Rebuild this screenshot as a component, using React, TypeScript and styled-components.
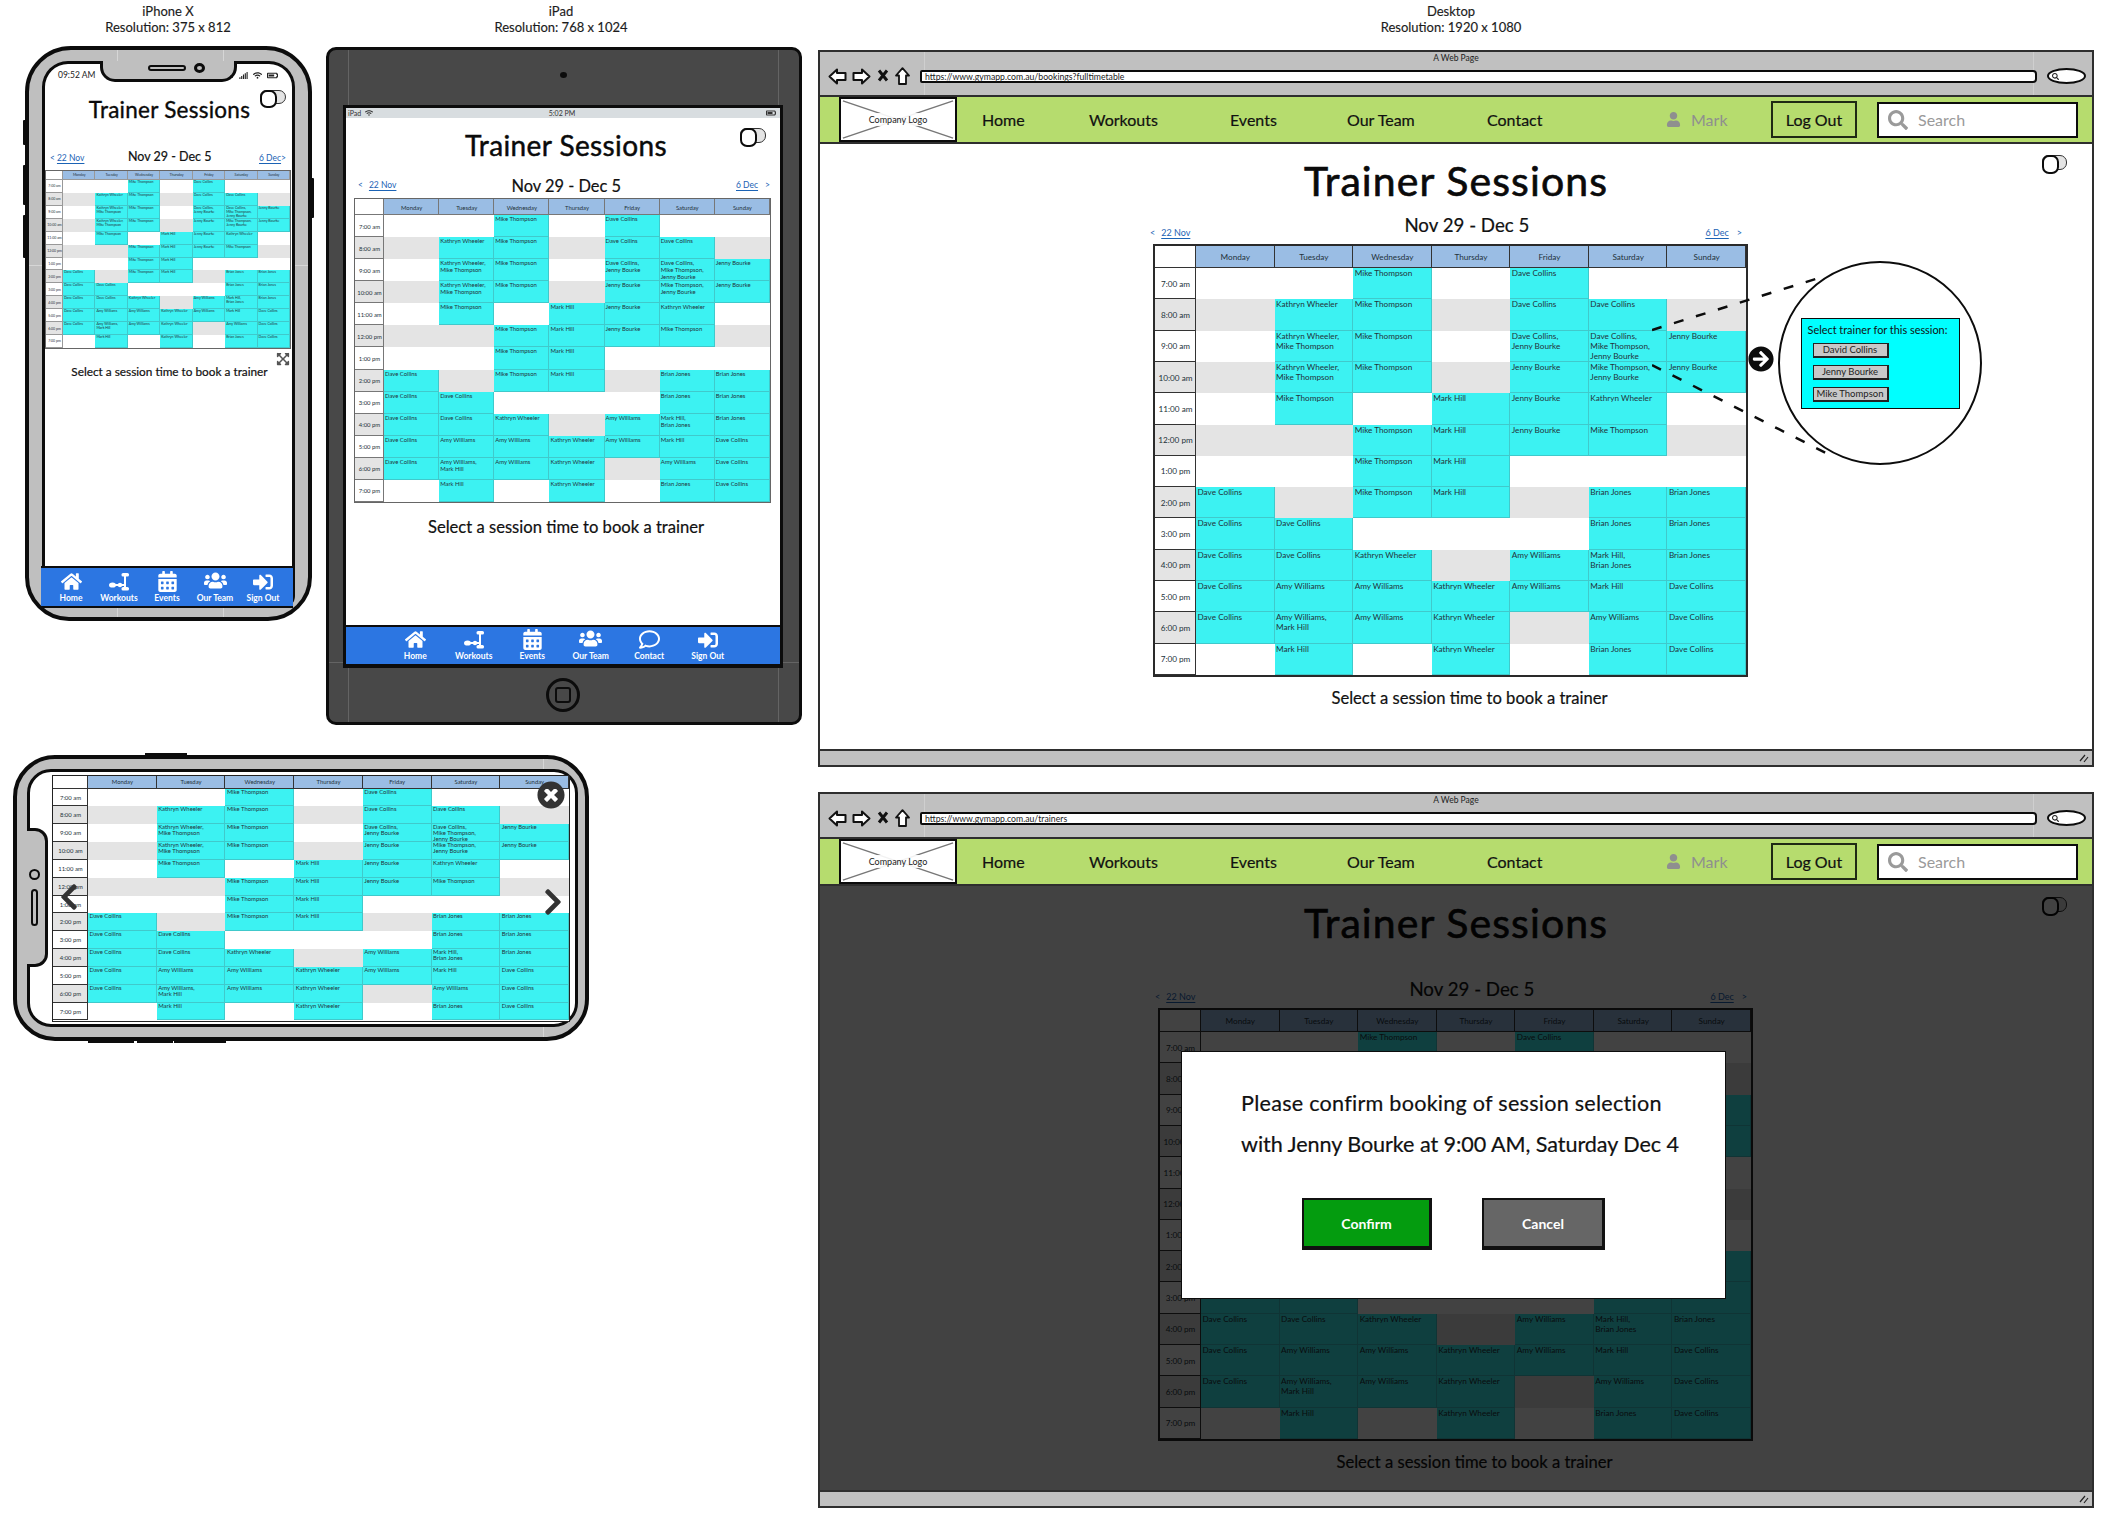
import React from 'react';
import styled, { createGlobalStyle } from 'styled-components';
import {
  FaArrowCircleRight,
  FaBatteryThreeQuarters,
  FaCalendarAlt,
  FaChevronLeft,
  FaChevronRight,
  FaExpandArrowsAlt,
  FaHome,
  FaRegComment,
  FaSearch,
  FaSignal,
  FaSignInAlt,
  FaTimesCircle,
  FaUser,
  FaUsers,
  FaWifi,
} from 'react-icons/fa';

const GlobalStyle = createGlobalStyle`
  html, body { margin: 0; padding: 0; background: #fff; }
  * { box-sizing: border-box; }
  body { font-family: Lato, "Open Sans", sans-serif; color: #111; }
`;

const INK = '#0c0c0c';
const CASE = '#bfbfbf';
const CYAN = '#3cf2f2';
const SHADE = '#e4e4e4';
const BLUE = '#2c76e2';
const GREEN = '#b6dc6e';
const NARROW = '"Liberation Sans Narrow", Lato, sans-serif';

const Canvas = styled.div`
  position: relative;
  width: 2112px;
  height: 1524px;
  overflow: hidden;
  background: #fff;
`;

/* each mockup sits at its own place on the wireframe board */
const Slot = styled.section<{ $x: number; $y: number; $w: number; $h: number }>`
  position: absolute;
  left: ${({ $x }) => $x}px;
  top: ${({ $y }) => $y}px;
  width: ${({ $w }) => $w}px;
  height: ${({ $h }) => $h}px;
`;

const Caption = styled.div`
  text-align: center;
  font-size: 13px;
  line-height: 16px;
  color: #1c1c1c;
  -webkit-text-stroke: 0.15px #1c1c1c;
`;

/* timetable */
interface TableMetrics {
  width: number;
  height: number;
  head: number;
  first: number;
  family: string;
  font: number;
  line: number;
  pad: number;
  frame: string;
  rule: string;
}

const desktopTable: TableMetrics = { width: 595, height: 433, head: 22, first: 41, family: NARROW, font: 8.2, line: 10, pad: 1.5, frame: '2px solid #2a2a2a', rule: '#333' };
const tabletTable: TableMetrics = { width: 417, height: 305, head: 16, first: 29, family: NARROW, font: 5.9, line: 7, pad: 1, frame: '1.5px solid #666', rule: '#777' };
const phoneTable: TableMetrics = { width: 246, height: 179, head: 9, first: 17, family: NARROW, font: 3.5, line: 4.1, pad: 1, frame: '1px solid #666', rule: '#999' };
const wideTable: TableMetrics = { width: 518, height: 247, head: 13, first: 35, family: 'Lato, sans-serif', font: 5.9, line: 5.8, pad: 1.5, frame: '1.5px solid #222', rule: '#333' };

const TableGrid = styled.div<{ $m: TableMetrics }>`
  display: grid;
  flex: none;
  width: ${({ $m }) => $m.width}px;
  height: ${({ $m }) => $m.height}px;
  grid-template-columns: ${({ $m }) => $m.first}px repeat(7, 1fr);
  grid-template-rows: ${({ $m }) => $m.head}px repeat(13, 1fr);
  border: ${({ $m }) => $m.frame};
  background: #fff;
  font-family: ${({ $m }) => $m.family};
  font-size: ${({ $m }) => $m.font}px;
  line-height: ${({ $m }) => $m.line}px;
  color: #23323a;
`;

const HeadCell = styled.div<{ $rule: string }>`
  display: flex;
  align-items: center;
  justify-content: center;
  background: #9abde4;
  box-shadow: inset -1px -1px 0 ${({ $rule }) => $rule};
`;

const CornerCell = styled.div<{ $rule: string }>`
  background: #fff;
  box-shadow: inset -1px -1px 0 ${({ $rule }) => $rule};
`;

const TimeCell = styled.div<{ $shade: boolean; $rule: string }>`
  display: flex;
  align-items: center;
  justify-content: center;
  white-space: nowrap;
  background: ${({ $shade }) => ($shade ? SHADE : '#fff')};
  box-shadow: inset -1px -1px 0 ${({ $rule }) => $rule};
`;

const SessionCell = styled.div<{ $shade: boolean; $booked: boolean; $pad: number }>`
  padding-left: ${({ $pad }) => $pad}px;
  white-space: pre-line;
  background: ${({ $booked, $shade }) => ($booked ? CYAN : $shade ? SHADE : '#fff')};
  box-shadow: ${({ $booked }) => ($booked ? 'inset -1px -1px 0 rgba(70, 140, 145, 0.4)' : 'none')};
`;

const DAYS = ['Monday', 'Tuesday', 'Wednesday', 'Thursday', 'Friday', 'Saturday', 'Sunday'];
const MT = 'Mike Thompson';
const KW = 'Kathryn Wheeler';
const DC = 'Dave Collins';
const JB = 'Jenny Bourke';
const MH = 'Mark Hill';
const BJ = 'Brian Jones';
const AW = 'Amy Williams';

const SCHEDULE: [string, string[]][] = [
  ['7:00 am', ['', '', MT, '', DC, '', '']],
  ['8:00 am', ['', KW, MT, '', DC, DC, '']],
  ['9:00 am', ['', `${KW},\n${MT}`, MT, '', `${DC},\n${JB}`, `${DC},\n${MT},\n${JB}`, JB]],
  ['10:00 am', ['', `${KW},\n${MT}`, MT, '', JB, `${MT},\n${JB}`, JB]],
  ['11:00 am', ['', MT, '', MH, JB, KW, '']],
  ['12:00 pm', ['', '', MT, MH, JB, MT, '']],
  ['1:00 pm', ['', '', MT, MH, '', '', '']],
  ['2:00 pm', [DC, '', MT, MH, '', BJ, BJ]],
  ['3:00 pm', [DC, DC, '', '', '', BJ, BJ]],
  ['4:00 pm', [DC, DC, KW, '', AW, `${MH},\n${BJ}`, BJ]],
  ['5:00 pm', [DC, AW, AW, KW, AW, MH, DC]],
  ['6:00 pm', [DC, `${AW},\n${MH}`, AW, KW, '', AW, DC]],
  ['7:00 pm', ['', MH, '', KW, '', BJ, DC]],
];

const Timetable = ({ metrics }: { metrics: TableMetrics }) => (
  <TableGrid $m={metrics}>
    <CornerCell $rule={metrics.rule} />
    {DAYS.map((day) => (
      <HeadCell key={day} $rule={metrics.rule}>{day}</HeadCell>
    ))}
    {SCHEDULE.map(([time, cells], row) => (
      <React.Fragment key={time}>
        <TimeCell $shade={row % 2 === 1} $rule={metrics.rule}>{time}</TimeCell>
        {cells.map((name, col) => (
          <SessionCell key={col} $shade={row % 2 === 1} $booked={name !== ''} $pad={metrics.pad}>
            {name}
          </SessionCell>
        ))}
      </React.Fragment>
    ))}
  </TableGrid>
);

/* bits shared by the mockups */
const Toggle = styled.div<{ $w: number; $h: number }>`
  position: relative;
  flex: none;
  width: ${({ $w }) => $w}px;
  height: ${({ $h }) => $h}px;
  border: 1.5px solid #333;
  border-radius: 6px 7px 7px 6px;
  background: #e4e4e4;
  &::before {
    content: '';
    position: absolute;
    left: -1.5px;
    top: -1.5px;
    width: ${({ $w }) => Math.round($w / 2)}px;
    height: ${({ $h }) => $h}px;
    border: 2px solid ${INK};
    border-radius: 7px;
    background: #fff;
  }
`;

const TitleRow = styled.div<{ $h: number }>`
  display: grid;
  grid-template-columns: 1fr auto 1fr;
  height: ${({ $h }) => $h}px;
  flex: none;
`;

const ToggleSpot = styled.div<{ $top: number; $right: number }>`
  grid-column: 3;
  display: flex;
  justify-content: flex-end;
  padding-top: ${({ $top }) => $top}px;
  padding-right: ${({ $right }) => $right}px;
`;

const PageTitle = styled.h1<{ $size: number; $h: number; $track?: number; $shift?: number }>`
  grid-column: 2;
  margin: 0;
  font-size: ${({ $size }) => $size}px;
  font-weight: 400;
  line-height: ${({ $h }) => $h}px;
  letter-spacing: ${({ $track }) => $track ?? 0}px;
  white-space: nowrap;
  color: #0a0a0a;
  -webkit-text-stroke: 0.016em #0a0a0a;
  transform: translateX(${({ $shift }) => $shift ?? 0}px);
`;

const WeekRow = styled.div<{ $h: number; $pad: string; $gap?: number; $pull?: number }>`
  display: flex;
  flex: none;
  align-items: center;
  justify-content: space-between;
  height: ${({ $h }) => $h}px;
  padding: ${({ $pad }) => $pad};
  margin-top: ${({ $gap }) => $gap ?? 0}px;
  margin-left: ${({ $pull }) => -($pull ?? 0)}px;
`;

const WeekLabel = styled.div<{ $size: number; $shift?: number }>`
  font-size: ${({ $size }) => $size}px;
  -webkit-text-stroke: 0.2px #111;
  white-space: nowrap;
  transform: translateX(${({ $shift }) => $shift ?? 0}px);
`;

const WeekLink = styled.div<{ $size: number; $gap: number; $drop?: number }>`
  display: flex;
  gap: ${({ $gap }) => $gap}px;
  font-size: ${({ $size }) => $size}px;
  white-space: nowrap;
  color: #1b63b5;
  transform: translateY(${({ $drop }) => $drop ?? 0}px);
  & > u {
    text-underline-offset: 1.5px;
  }
`;

const Hint = styled.div<{ $size: number; $h: number; $gap: number; $shift?: number }>`
  flex: none;
  margin-top: ${({ $gap }) => $gap}px;
  height: ${({ $h }) => $h}px;
  line-height: ${({ $h }) => $h}px;
  font-size: ${({ $size }) => $size}px;
  text-align: center;
  white-space: nowrap;
  -webkit-text-stroke: 0.2px #111;
  transform: translateX(${({ $shift }) => $shift ?? 0}px);
`;

const TabBar = styled.nav<{ $h: number; $inset: string; $end: number }>`
  display: flex;
  flex: none;
  justify-content: center;
  align-items: center;
  height: ${({ $h }) => $h}px;
  margin: ${({ $inset }) => $inset};
  padding-right: ${({ $end }) => $end}px;
  background: ${BLUE};
  border-top: 2px solid ${INK};
  border-bottom: 2px solid ${INK};
`;

const TabItem = styled.div<{ $w: number }>`
  display: flex;
  flex-direction: column;
  align-items: center;
  width: ${({ $w }) => $w}px;
  color: #fff;
  font-size: 8.5px;
  font-weight: 700;
  line-height: 11px;
  white-space: nowrap;
`;

const TabIcon = styled.div`
  display: flex;
  align-items: flex-end;
  justify-content: center;
  height: 21px;
  margin-bottom: 1px;
`;

const WorkoutsIcon = () => (
  <svg width="22" height="20" viewBox="0 0 22 20">
    <ellipse cx="4.5" cy="13" rx="3.5" ry="2.6" fill="#fff" />
    <path d="M7 13h9" stroke="#fff" strokeWidth="2" />
    <circle cx="12" cy="13" r="2.2" fill="#fff" />
    <path d="M17 3v14" stroke="#fff" strokeWidth="2" />
    <rect x="13.5" y="1" width="7.5" height="3.6" rx="1.6" fill="#fff" />
    <rect x="13.5" y="15" width="7.5" height="3.6" rx="1.6" fill="#fff" />
  </svg>
);

const TABS: { label: string; icon: React.ReactNode }[] = [
  { label: 'Home', icon: <FaHome size={21} /> },
  { label: 'Workouts', icon: <WorkoutsIcon /> },
  { label: 'Events', icon: <FaCalendarAlt size={21} /> },
  { label: 'Our Team', icon: <FaUsers size={23} /> },
  { label: 'Contact', icon: <FaRegComment size={21} /> },
  { label: 'Sign Out', icon: <FaSignInAlt size={20} /> },
];

/* iPhone, portrait */
const PhoneBody = styled.div`
  position: relative;
  display: flex;
  width: 100%;
  height: 100%;
  padding: 11px 13px 9px;
  border: 4px solid ${INK};
  border-radius: 46px 46px 44px 44px;
  background-color: ${CASE};
  background-image: linear-gradient(#d6d6d6, #d6d6d6), linear-gradient(#d6d6d6, #d6d6d6), linear-gradient(#d6d6d6, #d6d6d6);
  background-size: 1px 100%, 1px 100%, 100% 1px;
  background-position: 88px 0, 194px 0, 0 215px;
  background-repeat: no-repeat;
`;

const SideKey = styled.i<{ $side: 'left' | 'right'; $top: number; $h: number }>`
  position: absolute;
  ${({ $side }) => $side}: -6px;
  top: ${({ $top }) => $top}px;
  width: 3px;
  height: ${({ $h }) => $h}px;
  background: ${INK};
  border-radius: 1px;
`;

const PhoneScreen = styled.div`
  display: flex;
  flex-direction: column;
  flex: 1;
  border: 3px solid ${INK};
  border-bottom-width: 2px;
  border-radius: 26px 26px 12px 12px;
  background: #fff;
  min-width: 0;
`;

const Notch = styled.div`
  position: absolute;
  left: 71px;
  top: 11px;
  display: flex;
  align-items: center;
  justify-content: center;
  gap: 8px;
  width: 137px;
  height: 21px;
  padding: 0 0 4px 16px;
  border: 3px solid ${INK};
  border-top: none;
  border-radius: 0 0 15px 15px;
  background: ${CASE};
`;

const Speaker = styled.div`
  width: 38px;
  height: 6px;
  border: 2.5px solid ${INK};
  border-radius: 3px;
`;

const Lens = styled.div`
  width: 11px;
  height: 10px;
  border: 3px solid ${INK};
  border-radius: 50%;
`;

const PhoneStatus = styled.div`
  display: flex;
  flex: none;
  align-items: center;
  justify-content: space-between;
  height: 22px;
  padding: 0 14px 0 13px;
  font-size: 8.5px;
  color: #222;
`;

const StatusIcons = styled.div`
  display: flex;
  align-items: center;
  gap: 5px;
  color: #222;
`;

const ExpandRow = styled.div`
  display: flex;
  flex: none;
  justify-content: flex-end;
  height: 17px;
  padding: 3px 2px 0 0;
  color: #555;
`;

const Filler = styled.div`
  flex: 1;
`;

const IPhoneMock = () => (
  <PhoneBody>
    <SideKey $side="left" $top={70} $h={25} />
    <SideKey $side="left" $top={115} $h={40} />
    <SideKey $side="left" $top={165} $h={43} />
    <SideKey $side="right" $top={128} $h={40} />
    <Notch>
      <Speaker />
      <Lens />
    </Notch>
    <PhoneScreen>
      <PhoneStatus>
        <span>09:52 AM</span>
        <StatusIcons>
          <FaSignal size={9} />
          <FaWifi size={9} />
          <FaBatteryThreeQuarters size={11} />
        </StatusIcons>
      </PhoneStatus>
      <TitleRow $h={48}>
        <PageTitle $size={22.5} $h={48} $track={0.25} $shift={1}>Trainer Sessions</PageTitle>
        <ToggleSpot $top={4} $right={6}>
          <Toggle $w={26} $h={14} />
        </ToggleSpot>
      </TitleRow>
      <WeekRow $h={36} $pad="8px 6px 0 5px">
        <WeekLink $size={8.5} $gap={2} $drop={2}><span>&lt;</span><u>22 Nov</u></WeekLink>
        <WeekLabel $size={12.5} $shift={-2}>Nov 29 - Dec 5</WeekLabel>
        <WeekLink $size={8.5} $gap={0} $drop={2}><u>6 Dec</u><span>&gt;</span></WeekLink>
      </WeekRow>
      <Timetable metrics={phoneTable} />
      <ExpandRow><FaExpandArrowsAlt size={14} /></ExpandRow>
      <Hint $size={11.8} $h={12} $gap={0} $shift={1}>Select a session time to book a trainer</Hint>
      <Filler />
      <TabBar $h={42} $inset="0 -1px -2px -4px" $end={0}>
        {TABS.filter((tab) => tab.label !== 'Contact').map((tab) => (
          <TabItem key={tab.label} $w={48}>
            <TabIcon>{tab.icon}</TabIcon>
            {tab.label}
          </TabItem>
        ))}
      </TabBar>
    </PhoneScreen>
  </PhoneBody>
);

/* iPad */
const TabletBody = styled.div`
  display: flex;
  flex-direction: column;
  width: 100%;
  height: 100%;
  padding: 0 16px 0 14px;
  border: 3px solid ${INK};
  border-radius: 10px;
  background-color: #484848;
  background-image: linear-gradient(#646464, #646464), linear-gradient(#646464, #646464), linear-gradient(#646464, #646464);
  background-size: 1px 100%, 1px 100%, 100% 1px;
  background-position: 19px 0, 449px 0, 0 612px;
  background-repeat: no-repeat;
`;

const TabletTop = styled.div`
  display: flex;
  flex: none;
  align-items: center;
  justify-content: center;
  height: 55px;
`;

const TabletCamera = styled.div`
  width: 7px;
  height: 6px;
  margin-bottom: 5px;
  border-radius: 50%;
  background: ${INK};
`;

const TabletScreen = styled.div`
  display: flex;
  flex-direction: column;
  flex: none;
  height: 563px;
  border: 3px solid ${INK};
  background: #fff;
`;

const TabletStatus = styled.div`
  display: grid;
  grid-template-columns: 1fr auto 1fr;
  align-items: center;
  flex: none;
  height: 10px;
  padding: 0 4px 0 2px;
  background: #d8dde0;
  font-size: 7px;
  color: #333;
`;

const TabletStatusSide = styled.div<{ $end?: boolean }>`
  display: flex;
  align-items: center;
  gap: 4px;
  justify-content: ${({ $end }) => ($end ? 'flex-end' : 'flex-start')};
`;

const TabletBoard = styled.div`
  margin: 3px 0 0 8px;
`;

const HomeRow = styled.div`
  display: flex;
  flex: 1;
  align-items: center;
  justify-content: center;
`;

const HomeKey = styled.div`
  display: flex;
  align-items: center;
  justify-content: center;
  width: 34px;
  height: 34px;
  border: 3px solid ${INK};
  border-radius: 50%;
  &::after {
    content: '';
    width: 12px;
    height: 12px;
    border: 2.5px solid ${INK};
    border-radius: 3px;
  }
`;

const IPadMock = () => (
  <TabletBody>
    <TabletTop><TabletCamera /></TabletTop>
    <TabletScreen>
      <TabletStatus>
        <TabletStatusSide><span>iPad</span><FaWifi size={8} /></TabletStatusSide>
        <span>5:02 PM</span>
        <TabletStatusSide $end><FaBatteryThreeQuarters size={10} /></TabletStatusSide>
      </TabletStatus>
      <TitleRow $h={54}>
        <PageTitle $size={28} $h={54} $track={0.4} $shift={3}>Trainer Sessions</PageTitle>
        <ToggleSpot $top={10} $right={14}>
          <Toggle $w={26} $h={15} />
        </ToggleSpot>
      </TitleRow>
      <WeekRow $h={20} $pad="0 10px 0 12px" $gap={3}>
        <WeekLink $size={8.5} $gap={6}><span>&lt;</span><u>22 Nov</u></WeekLink>
        <WeekLabel $size={16.4}>Nov 29 - Dec 5</WeekLabel>
        <WeekLink $size={8.5} $gap={7}><u>6 Dec</u><span>&gt;</span></WeekLink>
      </WeekRow>
      <TabletBoard>
        <Timetable metrics={tabletTable} />
      </TabletBoard>
      <Hint $size={16.6} $h={20} $gap={14} $shift={3}>Select a session time to book a trainer</Hint>
      <Filler />
      <TabBar $h={41} $inset="0 0 -1px" $end={3}>
        {TABS.map((tab) => (
          <TabItem key={tab.label} $w={58.5}>
            <TabIcon>{tab.icon}</TabIcon>
            {tab.label}
          </TabItem>
        ))}
      </TabBar>
    </TabletScreen>
    <HomeRow><HomeKey /></HomeRow>
  </TabletBody>
);

/* iPhone, landscape, table expanded */
const WideBody = styled.div`
  position: relative;
  display: flex;
  width: 100%;
  height: 100%;
  padding: 10px 7px 10px 10px;
  border: 4px solid ${INK};
  border-radius: 42px;
  background-color: ${CASE};
  background-image: linear-gradient(#d6d6d6, #d6d6d6);
  background-size: 1px 100%;
  background-position: 526px 0;
  background-repeat: no-repeat;
`;

const EdgeKey = styled.i<{ $side: 'top' | 'bottom'; $left: number; $w: number }>`
  position: absolute;
  ${({ $side }) => $side}: -6px;
  left: ${({ $left }) => $left}px;
  width: ${({ $w }) => $w}px;
  height: 3px;
  background: ${INK};
`;

const WideScreen = styled.div`
  display: flex;
  flex: 1;
  align-items: center;
  padding: 0 5px 0 22px;
  border: 3px solid ${INK};
  border-radius: 24px;
  background: #fff;
`;

const SideNotch = styled.div`
  position: absolute;
  left: 10px;
  top: 69px;
  display: flex;
  flex-direction: column;
  align-items: center;
  gap: 9px;
  justify-content: center;
  width: 21px;
  height: 139px;
  padding-right: 4px;
  border: 3px solid ${INK};
  border-left: none;
  border-radius: 0 13px 13px 0;
  background: ${CASE};
`;

const SidePill = styled.div`
  width: 7px;
  height: 37px;
  border: 2px solid ${INK};
  border-radius: 4px;
`;

const SideLens = styled.div`
  width: 11px;
  height: 11px;
  border: 2.5px solid ${INK};
  border-radius: 50%;
`;

const FloatIcon = styled.div<{ $x: number; $y: number }>`
  position: absolute;
  left: ${({ $x }) => $x}px;
  top: ${({ $y }) => $y}px;
  display: flex;
  color: #333;
`;

const LandscapeMock = () => (
  <WideBody>
    <EdgeKey $side="top" $left={128} $w={42} />
    <EdgeKey $side="bottom" $left={71} $w={46} />
    <EdgeKey $side="bottom" $left={120} $w={36} />
    <EdgeKey $side="bottom" $left={157} $w={52} />
    <SideNotch>
      <SideLens />
      <SidePill />
    </SideNotch>
    <WideScreen>
      <Timetable metrics={wideTable} />
    </WideScreen>
    <FloatIcon $x={520} $y={22}><FaTimesCircle size={28} /></FloatIcon>
    <FloatIcon $x={37} $y={123}><FaChevronLeft size={30} /></FloatIcon>
    <FloatIcon $x={521} $y={128}><FaChevronRight size={30} /></FloatIcon>
  </WideBody>
);

/* browser window */
const WindowFrame = styled.div`
  display: flex;
  flex-direction: column;
  width: 100%;
  height: 100%;
  border: 2px solid #2e2e2e;
  background: #fff;
`;

const BrowserChrome = styled.div`
  flex: none;
  height: 45px;
  background-color: #c0c0c0;
  background-image: linear-gradient(#cfcfcf, #cfcfcf), linear-gradient(#cfcfcf, #cfcfcf);
  background-size: 1px 100%, 1px 100%;
  background-position: 104px 0, 1213px 0;
  background-repeat: no-repeat;
  border-bottom: 2px solid #2e2e2e;
`;

const PageName = styled.div`
  height: 13px;
  line-height: 13px;
  text-align: center;
  font-size: 8.5px;
  color: #222;
`;

const AddressRow = styled.div`
  display: flex;
  align-items: center;
  height: 16px;
  margin-top: 3px;
  padding: 0 6px 0 8px;
`;

const BrowserIcons = styled.div`
  display: flex;
  flex: none;
  width: 92px;
  align-items: center;
  gap: 3px;
`;

const AddressBar = styled.div`
  display: flex;
  flex: 1;
  align-items: center;
  height: 13px;
  padding-left: 3px;
  border: 2px solid ${INK};
  border-radius: 2px 4px 4px 2px;
  background: #fff;
  font-size: 8.7px;
  color: #222;
  white-space: nowrap;
`;

const SearchPill = styled.div`
  display: flex;
  flex: none;
  align-items: center;
  width: 39px;
  height: 16px;
  margin-left: 10px;
  padding-left: 3px;
  border: 2px solid ${INK};
  border-radius: 50%;
  background: #fff;
  color: #222;
`;

const SiteNav = styled.nav`
  display: flex;
  flex: none;
  align-items: center;
  height: 47px;
  padding-left: 19px;
  background: ${GREEN};
  border-bottom: 2px solid #2e2e2e;
`;

const LogoBox = styled.div`
  position: relative;
  display: flex;
  flex: none;
  align-items: center;
  justify-content: center;
  width: 118px;
  height: 45px;
  border: 2px solid ${INK};
  background: #fff;
`;

const LogoCross = styled.svg`
  position: absolute;
  inset: 0;
  width: 100%;
  height: 100%;
`;

const LogoLabel = styled.span`
  position: relative;
  padding: 1px 3px;
  border-radius: 3px;
  background: rgba(255, 255, 255, 0.9);
  font-size: 9px;
  color: #222;
`;

const NavLink = styled.a<{ $w: number; $first?: boolean }>`
  flex: none;
  width: ${({ $w }) => $w}px;
  margin-left: ${({ $first }) => ($first ? 25 : 0)}px;
  font-size: 16px;
  color: #111;
  -webkit-text-stroke: 0.2px #111;
`;

const UserTag = styled.div`
  display: flex;
  flex: none;
  align-items: center;
  gap: 10px;
  width: 105px;
  font-size: 16px;
  color: #8f8f8f;
`;

const LogOutButton = styled.button`
  flex: none;
  width: 86px;
  height: 37px;
  padding: 0;
  border: 2px solid #1f2a14;
  background: ${GREEN};
  font-family: inherit;
  font-size: 16px;
  color: #111;
  -webkit-text-stroke: 0.2px #111;
`;

const SearchField = styled.div`
  display: flex;
  flex: none;
  align-items: center;
  gap: 10px;
  width: 201px;
  height: 36px;
  margin-left: 20px;
  padding-left: 9px;
  border: 2px solid ${INK};
  background: #fff;
  font-size: 16px;
  color: #9a9a9a;
`;

const PageArea = styled.div`
  position: relative;
  flex: 1;
  padding-top: 7px;
  min-height: 0;
`;

const Board = styled.div<{ $left: number }>`
  display: flex;
  flex-direction: column;
  width: 595px;
  margin-left: ${({ $left }) => $left}px;
`;

const WindowFoot = styled.div`
  display: flex;
  flex: none;
  justify-content: flex-end;
  align-items: center;
  height: 16px;
  padding-right: 3px;
  background: #c0c0c0;
  border-top: 2px solid #2e2e2e;
`;

const Dimmer = styled.div`
  position: absolute;
  inset: 0;
  display: flex;
  align-items: center;
  justify-content: center;
  padding: 0 5px 26px 0;
  background: rgba(0, 0, 0, 0.74);
`;

const Dialog = styled.div`
  display: flex;
  flex-direction: column;
  width: 545px;
  height: 248px;
  padding: 31px 0 0 59px;
  border: 1.5px solid ${INK};
  background: #fff;
`;

const DialogLine = styled.div<{ $track: number }>`
  height: 41px;
  line-height: 41px;
  font-size: 21.6px;
  letter-spacing: ${({ $track }) => $track}px;
  color: #111;
  white-space: nowrap;
  -webkit-text-stroke: 0.2px #111;
`;

const DialogActions = styled.div`
  display: flex;
  gap: 50px;
  margin: 33px 0 0 61px;
`;

const DialogButton = styled.button<{ $bg: string; $w: number }>`
  width: ${({ $w }) => $w}px;
  height: 52px;
  padding: 0;
  border: 2px solid #111;
  border-right-width: 3px;
  border-bottom-width: 4px;
  background: ${({ $bg }) => $bg};
  font-family: inherit;
  font-size: 14px;
  font-weight: 700;
  color: #fff;
`;

/* zoomed trainer picker on the first window */
const CalloutLines = styled.svg`
  position: absolute;
  left: 832px;
  top: 133px;
  width: 180px;
  height: 180px;
`;

const ZoomBadge = styled.div`
  position: absolute;
  left: 928px;
  top: 202px;
  display: flex;
  color: ${INK};
  background: #fff;
  border-radius: 50%;
`;

const ZoomCircle = styled.div`
  position: absolute;
  left: 958px;
  top: 117px;
  display: flex;
  align-items: center;
  justify-content: center;
  width: 204px;
  height: 204px;
  border: 2.5px solid ${INK};
  border-radius: 50%;
  background: #fff;
`;

const PickerPanel = styled.div`
  width: 159px;
  height: 91px;
  padding: 5px 5px 0 6px;
  border: 1.5px solid ${INK};
  background: #00ffff;
  font-size: 10.9px;
  line-height: 12px;
  color: #111;
  white-space: nowrap;
`;

const PickerList = styled.div`
  display: flex;
  flex-direction: column;
  gap: 7px;
  margin: 7px 0 0 5px;
`;

const PickerButton = styled.button`
  width: 76px;
  height: 15px;
  padding: 0;
  border: 1px solid #222;
  border-right-width: 2px;
  border-bottom-width: 2px;
  background: #c8c8c8;
  font-family: inherit;
  font-size: 9.5px;
  line-height: 11px;
  color: #222;
`;

const ArrowGlyph = styled.svg<{ $flip?: boolean }>`
  flex: none;
  transform: ${({ $flip }) => ($flip ? 'scaleX(-1)' : 'none')};
`;

const ArrowIcon = ({ flip }: { flip?: boolean }) => (
  <ArrowGlyph $flip={flip} width="20" height="17" viewBox="0 0 20 17">
    <path d="M1.5 8.5 9 1.5v3.5h8.5v7H9v3.5z" fill="#fff" stroke="#111" strokeWidth="2" strokeLinejoin="round" />
  </ArrowGlyph>
);

const StopGlyph = styled.svg`
  flex: none;
  margin: 0 3px 2px;
`;

const StopIcon = () => (
  <StopGlyph width="12" height="13" viewBox="0 0 12 13">
    <path d="M2 1.5l8 10M10 1.5l-8 10" stroke="#111" strokeWidth="3" />
  </StopGlyph>
);

const HouseIcon = () => (
  <svg width="15" height="19" viewBox="0 0 15 19">
    <path d="M7.5 1.2 14 8.5h-3V17H4V8.5H1z" fill="#fff" stroke="#111" strokeWidth="1.8" strokeLinejoin="round" />
  </svg>
);

const ResizeGrip = () => (
  <svg width="10" height="10" viewBox="0 0 10 10">
    <path d="M1 8 6 2M5 9l4-5" stroke="#222" strokeWidth="1.2" />
  </svg>
);

const BrowserMock = ({ url, board, week, children }: {
  url: string;
  board: number;
  week: number;
  children?: React.ReactNode;
}) => (
  <WindowFrame>
    <BrowserChrome>
      <PageName>A Web Page</PageName>
      <AddressRow>
        <BrowserIcons>
          <ArrowIcon />
          <ArrowIcon flip />
          <StopIcon />
          <HouseIcon />
        </BrowserIcons>
        <AddressBar>{url}</AddressBar>
        <SearchPill><FaSearch size={7} /></SearchPill>
      </AddressRow>
    </BrowserChrome>
    <SiteNav>
      <LogoBox>
        <LogoCross viewBox="0 0 118 45" preserveAspectRatio="none">
          <path d="M2 2l114 41M116 2 2 43" stroke="#777" strokeWidth="1.5" />
        </LogoCross>
        <LogoLabel>Company Logo</LogoLabel>
      </LogoBox>
      <NavLink $w={107} $first>Home</NavLink>
      <NavLink $w={141}>Workouts</NavLink>
      <NavLink $w={117}>Events</NavLink>
      <NavLink $w={140}>Our Team</NavLink>
      <NavLink $w={179}>Contact</NavLink>
      <UserTag><FaUser size={15} />Mark</UserTag>
      <LogOutButton>Log Out</LogOutButton>
      <SearchField><FaSearch size={20} />Search</SearchField>
    </SiteNav>
    <PageArea>
      <TitleRow $h={60}>
        <PageTitle $size={41} $h={60} $track={1.1}>Trainer Sessions</PageTitle>
        <ToggleSpot $top={4} $right={25}>
          <Toggle $w={25} $h={15} />
        </ToggleSpot>
      </TitleRow>
      <Board $left={board}>
        <WeekRow $h={29} $pad="0 6px 9px 0" $gap={week} $pull={3}>
          <WeekLink $size={9} $gap={6} $drop={7}><span>&lt;</span><u>22 Nov</u></WeekLink>
          <WeekLabel $size={18.7} $shift={19}>Nov 29 - Dec 5</WeekLabel>
          <WeekLink $size={9} $gap={8} $drop={7}><u>6 Dec</u><span>&gt;</span></WeekLink>
        </WeekRow>
        <Timetable metrics={desktopTable} />
        <Hint $size={16.6} $h={20} $gap={11} $shift={19}>Select a session time to book a trainer</Hint>
      </Board>
      {children}
    </PageArea>
    <WindowFoot><ResizeGrip /></WindowFoot>
  </WindowFrame>
);

const TRAINERS = ['David Collins', 'Jenny Bourke', 'Mike Thompson'];

export default function App() {
  return (
    <Canvas>
      <GlobalStyle />

      <Slot $x={68} $y={3} $w={200} $h={32}>
        <Caption>iPhone X<br />Resolution: 375 x 812</Caption>
      </Slot>
      <Slot $x={461} $y={3} $w={200} $h={32}>
        <Caption>iPad<br />Resolution: 768 x 1024</Caption>
      </Slot>
      <Slot $x={1351} $y={3} $w={200} $h={32}>
        <Caption>Desktop<br />Resolution: 1920 x 1080</Caption>
      </Slot>

      <Slot $x={25} $y={46} $w={287} $h={575}><IPhoneMock /></Slot>
      <Slot $x={326} $y={47} $w={476} $h={678}><IPadMock /></Slot>
      <Slot $x={13} $y={755} $w={576} $h={286}><LandscapeMock /></Slot>

      <Slot $x={818} $y={50} $w={1276} $h={717}>
        <BrowserMock url="https://www.gymapp.com.au/bookings?fulltimetable" board={333} week={4}>
          <CalloutLines viewBox="0 0 180 180">
            <path d="M0 53 170 0M0 88l178 90" stroke={INK} strokeWidth="2.5" strokeDasharray="10 13" fill="none" />
          </CalloutLines>
          <ZoomBadge><FaArrowCircleRight size={26} /></ZoomBadge>
          <ZoomCircle>
            <PickerPanel>
              Select trainer for this session:
              <PickerList>
                {TRAINERS.map((name) => (
                  <PickerButton key={name}>{name}</PickerButton>
                ))}
              </PickerList>
            </PickerPanel>
          </ZoomCircle>
        </BrowserMock>
      </Slot>

      <Slot $x={818} $y={792} $w={1276} $h={716}>
        <BrowserMock url="https://www.gymapp.com.au/trainers" board={338} week={26}>
          <Dimmer>
            <Dialog>
              <DialogLine $track={0.25}>Please confirm booking of session selection</DialogLine>
              <DialogLine $track={-0.07}>with Jenny Bourke at 9:00 AM, Saturday Dec 4</DialogLine>
              <DialogActions>
                <DialogButton $bg="#049c0f" $w={130}>Confirm</DialogButton>
                <DialogButton $bg="#666" $w={123}>Cancel</DialogButton>
              </DialogActions>
            </Dialog>
          </Dimmer>
        </BrowserMock>
      </Slot>
    </Canvas>
  );
}
